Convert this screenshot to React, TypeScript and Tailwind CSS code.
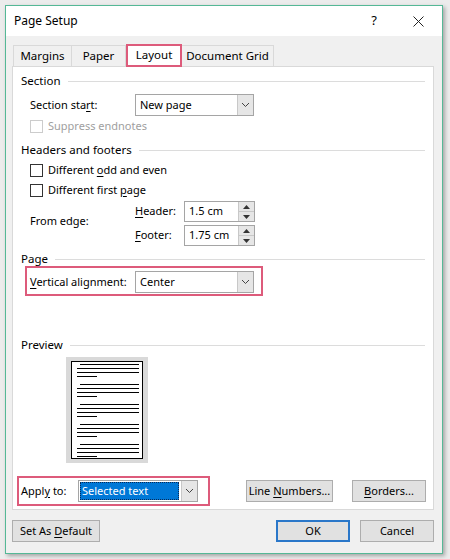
import React from "react";

const U = ({ children }: { children: React.ReactNode }) => (
  <span className="underline underline-offset-[2px] decoration-[1px]">{children}</span>
);

const Chevron = () => (
  <svg width="9" height="6" viewBox="0 0 9 6" fill="none">
    <path d="M1 1 L4.5 4.5 L8 1" stroke="#444" strokeWidth="1" />
  </svg>
);

const Dropdown = ({ value, width, selected }: { value: string; width: number; selected?: boolean }) => (
  <div
    className="h-[22px] shrink-0 flex items-stretch bg-white border border-[#a5a5a5]"
    style={{ width }}
  >
    <div className="flex-1 flex items-center pl-[1px] pr-[2px]">
      {selected ? (
        <div className="flex-1 h-[18px] flex items-center bg-[#0078d7] text-white px-[2px] outline outline-1 outline-dotted outline-[#0a2a55] -outline-offset-1 whitespace-nowrap">
          {value}
        </div>
      ) : (
        <span className="pl-[3px] whitespace-nowrap">{value}</span>
      )}
    </div>
    <div className="w-[16px] bg-[#e6e6e6] border-l border-[#c8c8c8] flex items-center justify-center">
      <Chevron />
    </div>
  </div>
);

const Spin = ({ value }: { value: string }) => (
  <div className="w-[71px] h-[21px] shrink-0 flex items-stretch bg-white border border-[#a5a5a5]">
    <div className="flex-1 flex items-center pl-[4px] whitespace-nowrap">{value}</div>
    <div className="w-[16px] bg-[#e6e6e6] border-l border-[#c8c8c8] flex flex-col">
      <div className="flex-1 flex items-center justify-center border-b border-[#c8c8c8]">
        <svg width="7" height="4" viewBox="0 0 7 4"><path d="M0 4 L3.5 0 L7 4 Z" fill="#333" /></svg>
      </div>
      <div className="flex-1 flex items-center justify-center">
        <svg width="7" height="4" viewBox="0 0 7 4"><path d="M0 0 L3.5 4 L7 0 Z" fill="#333" /></svg>
      </div>
    </div>
  </div>
);

const Check = ({ disabled }: { disabled?: boolean }) => (
  <div
    className={
      "w-[13px] h-[13px] shrink-0 bg-white border " + (disabled ? "border-[#cccccc]" : "border-[#333333]")
    }
  />
);

const GroupHeader = ({ label, mt }: { label: string; mt: string }) => (
  <div className={"h-[14px] flex items-center pl-[8px] pr-[8px] " + mt}>
    <span className="leading-none whitespace-nowrap text-[11.5px]">{label}</span>
    <div className="flex-1 h-px bg-[#dcdcdc] ml-[7px]" />
  </div>
);

const Btn = ({ children, w, primary }: { children: React.ReactNode; w: string; primary?: boolean }) => (
  <div
    className={
      "h-[22px] shrink-0 whitespace-nowrap flex items-center justify-center bg-[#e1e1e1] " +
      w +
      (primary ? " border-2 border-[#2a77c9]" : " border border-[#adadad]")
    }
  >
    {children}
  </div>
);

const PreviewPage = () => {
  const groups = [0, 1, 2, 3, 4];
  return (
    <div className="ml-[53px] mt-[5px] w-[82px] h-[106px] bg-[#d9d9d9] flex items-center justify-center">
      <div className="w-[72px] h-[98px] bg-white border border-black flex flex-col gap-[7px] pt-[2px] pl-[5px] pr-[3px]">
        {groups.map((g) => (
          <div key={g} className="flex flex-col gap-[3px] shrink-0">
            <div className="h-px bg-black ml-[3px]" />
            <div className="h-px bg-black" />
            <div className="h-px bg-black" />
            <div className="h-px bg-black w-[20px]" />
          </div>
        ))}
      </div>
    </div>
  );
};

export default function App() {
  return (
    <div
      className="w-[450px] h-[559px] bg-[#ececec] pl-[5px] pt-[5px] text-[11px] text-black"
      style={{ fontFamily: '"Noto Sans", "Open Sans", sans-serif' }}
    >
      <div className="w-[438px] h-[549px] border border-[#55b896] flex flex-col bg-[#f0f0f0] shadow-[2px_2px_4px_rgba(0,0,0,0.3)]">
        {/* title bar */}
        <div className="h-[30px] bg-white flex items-center pl-[8px] text-[12px]">
          <span className="whitespace-nowrap">Page Setup</span>
          <div className="flex-1" />
          <span className="mr-[36px] text-[13px]">?</span>
          <svg className="mr-[18px]" width="11" height="11" viewBox="0 0 11 11">
            <path d="M0.5 0.5 L10.5 10.5 M10.5 0.5 L0.5 10.5" stroke="#222" strokeWidth="1" />
          </svg>
        </div>
        {/* body */}
        <div className="flex-1 flex flex-col pl-[6px] pr-[8px]">
          {/* tabs */}
          <div className="mt-[8px] h-[22px] flex items-end relative z-10 text-[11.5px]">
            <div className="ml-[1px] w-[59px] h-[21px] flex items-center justify-center border border-b-0 border-[#d9d9d9]">
              Margins
            </div>
            <div className="w-[54px] h-[21px] flex items-center justify-center border-t border-r border-[#d9d9d9]">
              Paper
            </div>
            <div className="w-[56px] h-[23px] -mb-px flex items-center justify-center bg-white border-2 border-[#dd5b7b] pb-[2px]">
              Layout
            </div>
            <div className="w-[92px] h-[21px] flex items-center justify-center border-t border-r border-[#d9d9d9] whitespace-nowrap">
              Document Grid
            </div>
          </div>
          {/* panel */}
          <div className="h-[444px] bg-white border border-[#d9d9d9] flex flex-col">
            <GroupHeader label="Section" mt="mt-[7px]" />
            <div className="mt-[6px] h-[22px] flex items-center pl-[17px]">
              <span className="w-[105px] shrink-0 whitespace-nowrap">
                Section sta<U>r</U>t:
              </span>
              <Dropdown value="New page" width={119} />
            </div>
            <div className="mt-[3px] h-[14px] flex items-center pl-[17px]">
              <Check disabled />
              <span className="ml-[5px] text-[#a0a0a0] whitespace-nowrap">Suppress endnotes</span>
            </div>
            <GroupHeader label="Headers and footers" mt="mt-[10px]" />
            <div className="mt-[6px] h-[14px] flex items-center pl-[17px]">
              <Check />
              <span className="ml-[5px] whitespace-nowrap">
                Different <U>o</U>dd and even
              </span>
            </div>
            <div className="mt-[6px] h-[14px] flex items-center pl-[17px]">
              <Check />
              <span className="ml-[5px] whitespace-nowrap">
                Different first <U>p</U>age
              </span>
            </div>
            <div className="mt-[4px] flex items-center pl-[17px]">
              <span className="w-[105px] shrink-0 -mt-[4px] whitespace-nowrap">From edge:</span>
              <div className="flex flex-col gap-[3px]">
                <div className="flex items-center h-[21px]">
                  <span className="w-[49px] shrink-0 whitespace-nowrap">
                    <U>H</U>eader:
                  </span>
                  <Spin value="1.5 cm" />
                </div>
                <div className="flex items-center h-[21px]">
                  <span className="w-[49px] shrink-0 whitespace-nowrap">
                    <U>F</U>ooter:
                  </span>
                  <Spin value="1.75 cm" />
                </div>
              </div>
            </div>
            <GroupHeader label="Page" mt="mt-[6px]" />
            <div className="ml-[12px] w-[238px] h-[30px] border-2 border-[#dd5b7b] flex items-end pb-[1px] pl-[3px]">
              <div className="flex items-center">
                <span className="w-[105px] shrink-0 whitespace-nowrap">
                  <U>V</U>ertical alignment:
                </span>
                <Dropdown value="Center" width={119} />
              </div>
            </div>
            <GroupHeader label="Preview" mt="mt-[42px]" />
            <PreviewPage />
            <div className="mt-[13px] flex items-center">
              <div className="ml-[4px] w-[193px] h-[30px] shrink-0 border-2 border-[#dd5b7b] flex items-center pl-[2px]">
                <span className="w-[57px] shrink-0 whitespace-nowrap">
                  Appl<U>y</U> to:
                </span>
                <Dropdown value="Selected text" width={120} selected />
              </div>
              <div className="ml-[36px]">
                <Btn w="w-[87px]">
                  <span>
                    Line <U>N</U>umbers...
                  </span>
                </Btn>
              </div>
              <div className="ml-[19px]">
                <Btn w="w-[74px]">
                  <span>
                    <U>B</U>orders...
                  </span>
                </Btn>
              </div>
            </div>
          </div>
          {/* bottom buttons */}
          <div className="mt-[10px] flex items-center">
            <Btn w="w-[88px]">
              <span>
                Set As <U>D</U>efault
              </span>
            </Btn>
            <div className="flex-1" />
            <Btn w="w-[74px]" primary>
              OK
            </Btn>
            <div className="ml-[10px]">
              <Btn w="w-[74px]">Cancel</Btn>
            </div>
          </div>
        </div>
      </div>
    </div>
  );
}
